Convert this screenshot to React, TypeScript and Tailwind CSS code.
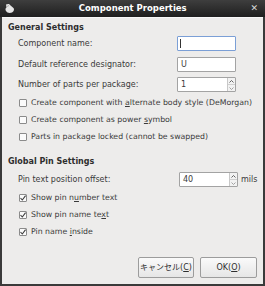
import React from 'react'

const font = { fontFamily: '"DejaVu Sans", "Noto Sans CJK JP", sans-serif' }

function Check({ checked }: { checked?: boolean }) {
  return (
    <div className="w-[8px] h-[8px] border border-[#8b8b8b] bg-[#fbfbfb] rounded-[1px] flex items-center justify-center shrink-0">
      {checked && (
        <svg width="6" height="6" viewBox="0 0 6 6">
          <path d="M0.5 3 L2.3 5 L5.6 0.6" fill="none" stroke="#3a3a3a" strokeWidth="1.1" />
        </svg>
      )}
    </div>
  )
}

function CheckRow({ label, checked, mt }: { label: React.ReactNode; checked?: boolean; mt: string }) {
  return (
    <div className={`flex items-center h-[12px] pl-[17px] gap-[4px] ${mt}`}>
      <Check checked={checked} />
      <span className="text-[7.8px] leading-[12px]">{label}</span>
    </div>
  )
}

function Spin() {
  return (
    <div className="flex flex-col w-[8px] h-full border-l border-[#c8c8c8]">
      <div className="flex-1 flex items-center justify-center bg-[#f2f2f2] border-b border-[#d0d0d0]">
        <svg width="5" height="3" viewBox="0 0 5 3"><path d="M0.5 2.5 L2.5 0.5 L4.5 2.5" fill="none" stroke="#555" strokeWidth="0.9" /></svg>
      </div>
      <div className="flex-1 flex items-center justify-center bg-[#f2f2f2]">
        <svg width="5" height="3" viewBox="0 0 5 3"><path d="M0.5 0.5 L2.5 2.5 L4.5 0.5" fill="none" stroke="#999" strokeWidth="0.9" /></svg>
      </div>
    </div>
  )
}

const U = ({ children }: { children: React.ReactNode }) => <span className="underline underline-offset-[1px]">{children}</span>

export default function App() {
  return (
    <div style={font} className="w-[265px] h-[286px] bg-[#3a3a3a] flex flex-col overflow-hidden">
      {/* Title bar */}
      <div className="h-[17px] shrink-0 flex items-center px-[4px] bg-gradient-to-b from-[#3e3e3e] to-[#1f1f1f]">
        <svg width="11" height="11" viewBox="0 0 11 11" className="shrink-0">
          <path d="M2 1.5 C4 0.5 6 1 6.5 2.5 L9.5 5 C10.5 6 10 8.5 8 9.5 C6 10.5 3 10 2 8 C1 6.5 1.5 5 2.5 4.5 Z" fill="#e6e6e6" />
          <path d="M3 3.5 L5 2.5" stroke="#9a9a9a" strokeWidth="0.8" />
        </svg>
        <div className="flex-1 text-center text-[8.5px] font-bold text-white leading-[17px]">Component Properties</div>
        <span className="text-[9px] text-[#d8d8d8] leading-[17px] pr-[3px]">✕</span>
      </div>

      {/* Body */}
      <div className="flex-1 mx-[2px] mb-[2px] bg-[#edeceb] border-t border-[#f8f8f8] flex flex-col text-[#3a3a3a]">
        <div className="pl-[6px] mt-[4px] h-[12px] text-[8px] leading-[12px] font-bold text-[#2e2e2e]">General Settings</div>

        <div className="flex items-center h-[15px] mt-[2px] pl-[16px] pr-[27px]">
          <span className="flex-1 text-[8px]">Component name:</span>
          <div className="w-[59px] h-full bg-white border border-[#7b9fd6] rounded-[1px] flex items-center pl-[2px]">
            <div className="w-px h-[9px] bg-[#333]" />
          </div>
        </div>

        <div className="flex items-center h-[15px] mt-[6px] pl-[16px] pr-[27px]">
          <span className="flex-1 text-[8px]">Default reference designator:</span>
          <div className="w-[59px] h-full bg-white border border-[#a3a3a3] rounded-[1px] flex items-center pl-[3px] text-[8px]">U</div>
        </div>

        <div className="flex items-center h-[15px] mt-[5px] pl-[16px] pr-[27px]">
          <span className="flex-1 text-[8px]">Number of parts per package:</span>
          <div className="w-[59px] h-full bg-white border border-[#a3a3a3] rounded-[1px] flex items-center text-[8px]">
            <span className="flex-1 pl-[3px]">1</span>
            <Spin />
          </div>
        </div>

        <CheckRow mt="mt-[5px]" label={<>Create component with <U>a</U>lternate body style (DeMorgan)</>} />
        <CheckRow mt="mt-[5px]" label={<>Create component as power <U>s</U>ymbol</>} />
        <CheckRow mt="mt-[5px]" label={<>Parts in package locked (cannot be swapped)</>} />

        <div className="pl-[6px] mt-[13px] h-[12px] text-[8px] leading-[12px] font-bold text-[#2e2e2e]">Global Pin Settings</div>

        <div className="flex items-center h-[15px] mt-[4px] pl-[16px]">
          <span className="flex-1 text-[8px]">Pin text position offset:</span>
          <div className="w-[59px] h-full bg-white border border-[#a3a3a3] rounded-[1px] flex items-center text-[8px]">
            <span className="flex-1 pl-[3px]">40</span>
            <Spin />
          </div>
          <span className="text-[8px] w-[25px] pl-[3px]">mils</span>
        </div>

        <CheckRow checked mt="mt-[5px]" label={<>Show pin n<U>u</U>mber text</>} />
        <CheckRow checked mt="mt-[5px]" label={<>Show pin name te<U>x</U>t</>} />
        <CheckRow checked mt="mt-[5px]" label={<>Pin name <U>i</U>nside</>} />

        <div className="flex justify-end gap-[6px] mt-[19px] pr-[6px]">
          <button className="h-[21px] w-[56px] border border-[#9c9c9c] rounded-[2px] bg-gradient-to-b from-[#fafafa] to-[#e6e6e6] text-[8px] text-[#2e2e2e]">
            キャンセル(<U>C</U>)
          </button>
          <button className="h-[21px] w-[57px] border border-[#9c9c9c] rounded-[2px] bg-gradient-to-b from-[#fafafa] to-[#e6e6e6] text-[8px] text-[#2e2e2e]">
            OK(<U>O</U>)
          </button>
        </div>
      </div>
    </div>
  )
}
